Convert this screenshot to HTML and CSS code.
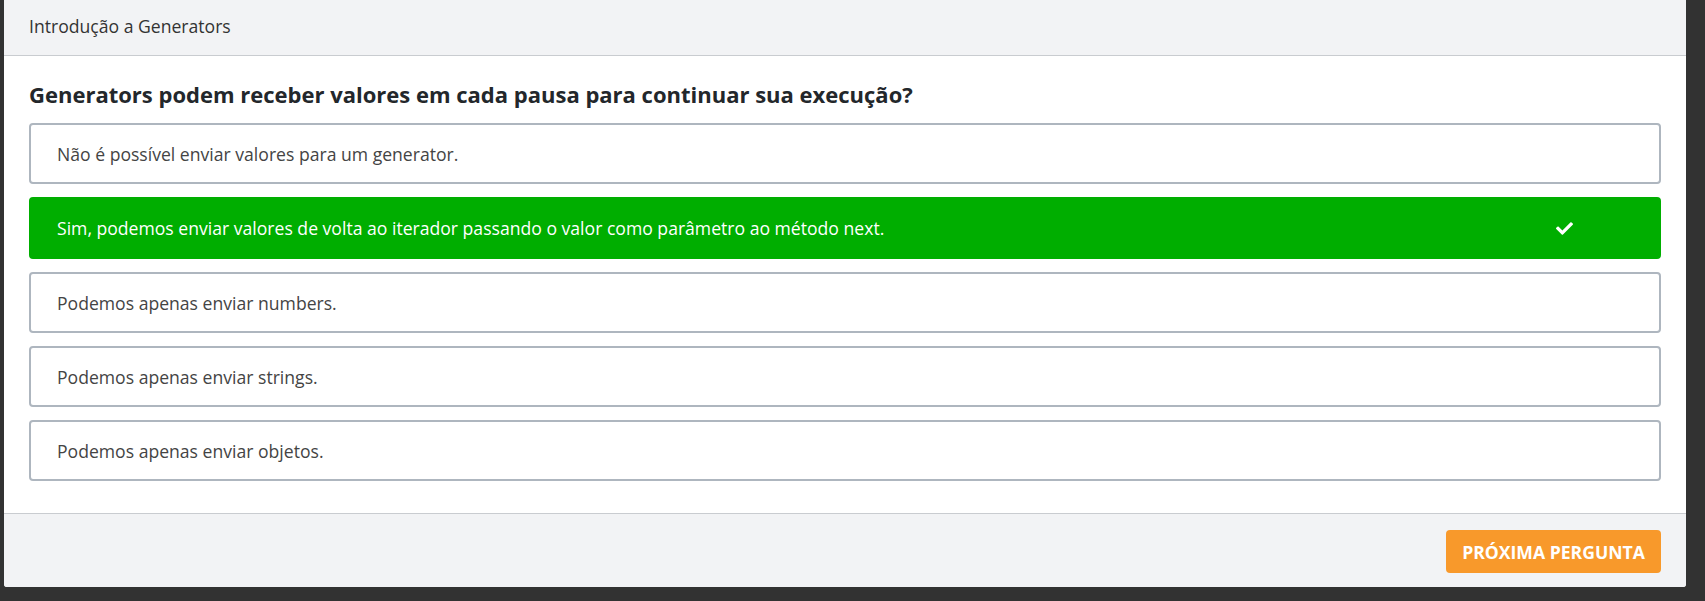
FILE: index.html
```html
<!DOCTYPE html>
<html lang="pt-BR">
<head>
<meta charset="utf-8">
<title>Introdução a Generators</title>
<link rel="stylesheet" href="styles.css">
</head>
<body>
<div class="card">
  <div class="card-header">Introdução a Generators</div>
  <div class="card-body">
    <h2 class="question">Generators podem receber valores em cada pausa para continuar sua execução?</h2>
    <ul class="options">
      <li class="option"><span class="option-text">Não é possível enviar valores para um generator.</span></li>
      <li class="option correct"><span class="option-text">Sim, podemos enviar valores de volta ao iterador passando o valor como parâmetro ao método next.</span>
        <svg class="check" viewBox="0 64 512 384" width="17" height="13" aria-hidden="true"><path fill="#fff" d="M173.898 439.404l-166.4-166.4c-9.997-9.997-9.997-26.206 0-36.204l36.203-36.204c9.997-9.998 26.207-9.998 36.204 0L192 312.69 432.095 72.596c9.997-9.997 26.207-9.997 36.204 0l36.203 36.204c9.997 9.997 9.997 26.206 0 36.204l-294.4 294.401c-9.998 9.997-26.207 9.997-36.204-.001z"/></svg>
      </li>
      <li class="option"><span class="option-text">Podemos apenas enviar numbers.</span></li>
      <li class="option"><span class="option-text">Podemos apenas enviar strings.</span></li>
      <li class="option"><span class="option-text">Podemos apenas enviar objetos.</span></li>
    </ul>
  </div>
  <div class="card-footer">
    <button class="btn-next" type="button">PRÓXIMA PERGUNTA</button>
  </div>
</div>
</body>
</html>
```

FILE: styles.css
```css
* { box-sizing: border-box; }
html, body { margin: 0; padding: 0; }
body {
  background: #323232;
  font-family: "Open Sans", "Noto Sans", sans-serif;
  color: #333;
  height: 601px;
  overflow: hidden;
}
.card {
  margin-left: 4px;
  width: 1682px;
  background: #fff;
  border-radius: 0 0 3px 3px;
  overflow: hidden;
}
.card-header {
  height: 56px;
  background: #f2f3f5;
  border-bottom: 1px solid #c9ccd0;
  padding: 0 25px;
  font-size: 17.6px;
  line-height: 52px;
  color: #333;
}
.card-body {
  padding: 23px 25px 32px 25px;
}
.question {
  margin: 0 0 14px 0;
  font-size: 22px;
  line-height: 30px;
  font-weight: 700;
  color: #23272b;
}
.options {
  list-style: none;
  margin: 0;
  padding: 0;
  display: flex;
  flex-direction: column;
  gap: 13px;
}
.option {
  height: 61px;
  border: 2px solid #aeb6bf;
  border-radius: 4px;
  padding: 0 26px;
  display: flex;
  align-items: center;
  font-size: 17.6px;
  color: #444;
}
.option-text { flex: 1; }
.option.correct {
  height: 62px;
  background: #00ae00;
  border-color: #00ae00;
  color: #fff;
}
.check {
  margin-right: 60px;
  flex: none;
}
.card-footer {
  height: 74px;
  background: #f2f3f5;
  border-top: 1px solid #c9ccd0;
  padding: 0 25px;
  display: flex;
  align-items: center;
  justify-content: flex-end;
}
.btn-next {
  height: 43px;
  width: 215px;
  background: #f8992b;
  border: none;
  border-radius: 4px;
  color: #fff;
  font-family: "Open Sans", "Noto Sans", sans-serif;
  font-size: 17.6px;
  font-weight: 700;
  padding: 0;
  margin-top: 2px;
}
```
